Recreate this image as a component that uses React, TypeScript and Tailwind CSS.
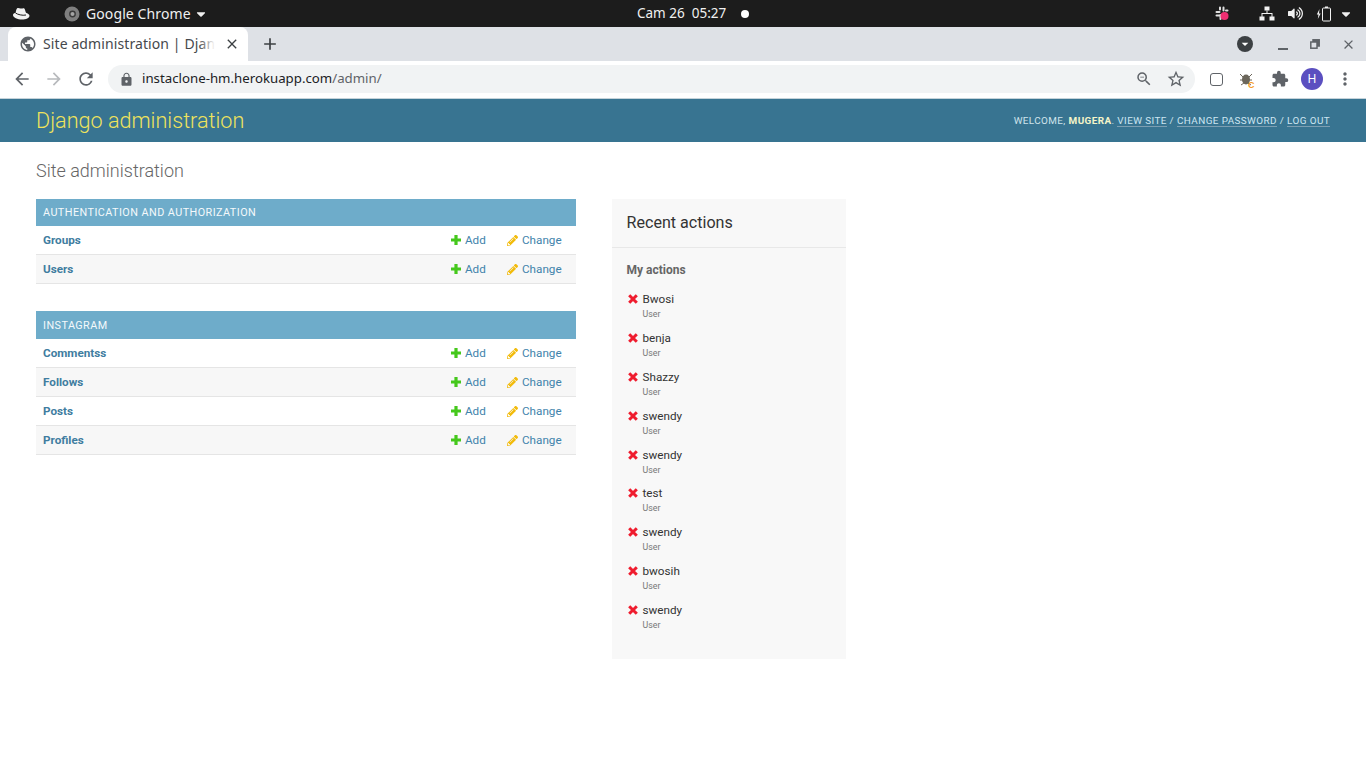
import { FaPencilAlt, FaCaretDown, FaVolumeUp } from "react-icons/fa";
import {
  MdArrowBack,
  MdArrowForward,
  MdRefresh,
  MdLock,
  MdExtension,
  MdMoreVert,
  MdPublic,
  MdClose,
  MdAdd,
  MdZoomOut,
  MdStarBorder,
  MdArrowDropDown,
} from "react-icons/md";

const authRows = ["Groups", "Users"];
const appRows = ["Commentss", "Follows", "Posts", "Profiles"];
const actions = ["Bwosi", "benja", "Shazzy", "swendy", "swendy", "test", "swendy", "bwosih", "swendy"];

function TopBar() {
  return (
    <div className="h-[27px] bg-[#1c1c1c] flex items-center relative text-[#f0f0f0] font-['Noto_Sans',sans-serif] text-[14px]">
      <svg className="ml-[12px] w-[19px] h-[14px]" viewBox="0 0 19 14">
        <path d="M5 1.500c1-.8 2-.2 3.500 0 1.500.2 3-.9 3.800 0 .7.9 1.200 3 1.700 4.200 1.500.6 3.500 1.500 3.500 3 0 2.300-3.500 3.800-7.500 3.800C5.500 12.500 1 10.500 1 8c0-1.500 1.500-2 2.500-2 .5-1.500.7-3.700 1.500-4.500z" fill="#f2f2f2" />
        <path d="M3.500 6c2 1.500 7 2.800 10.500 2" stroke="#1c1c1c" strokeWidth="1" fill="none" />
      </svg>
      <svg className="ml-[33px] w-[16px] h-[16px]" viewBox="0 0 16 16">
        <circle cx="8" cy="8" r="7.500" fill="#7f7f7f" />
        <circle cx="8.500" cy="8" r="3.400" fill="#3a3a3a" />
        <circle cx="8.500" cy="8" r="2" fill="#a5a5a5" />
      </svg>
      <span className="ml-[6px] tracking-[0.1px]">Google Chrome</span>
      <FaCaretDown className="ml-[3px] w-[14px] h-[14px]" />
      <div className="absolute left-[637px] top-0 h-full flex items-center text-[13.500px]">
        <span>Cam 26</span>
        <span className="ml-[7px]">05:27</span>
        <span className="ml-[15px] w-[8px] h-[8px] rounded-full bg-white" />
      </div>
      <div className="ml-auto flex items-center h-full">
        <svg className="w-[14px] h-[15px] mr-[30px]" viewBox="0 0 14 15">
          <g stroke="#e0e0e0" strokeWidth="2" strokeLinecap="round">
            <path d="M1.500 6h3M5 1.500v2M8.500 1.500v3M1.500 9.500h3M5.500 9v4M11 4.500h1.500" />
          </g>
          <circle cx="9.500" cy="10" r="4" fill="#ee2f72" />
        </svg>
        <svg className="w-[16px] h-[15px] mr-[13px]" viewBox="0 0 16 15" fill="#f2f2f2">
          <rect x="5.500" y="0.500" width="5" height="4" />
          <rect x="0.500" y="10.500" width="5" height="4" />
          <rect x="10.500" y="10.500" width="5" height="4" />
          <path d="M7.500 4.500h1V7h5v4h-1V8h-9v3h-1V7h5z" />
        </svg>
        <FaVolumeUp className="w-[15px] h-[15px] mr-[13px]" />
        <svg className="w-[15px] h-[16px] mr-[8px]" viewBox="0 0 15 16">
          <path d="M3.500 3 .8 8.500h1.700L1.800 13l2.900-5.500H3z" fill="#f2f2f2" />
          <rect x="6.500" y="2" width="8" height="13" rx="1" fill="none" stroke="#f2f2f2" />
          <rect x="9" y="0.500" width="3" height="1.500" fill="#f2f2f2" />
        </svg>
        <FaCaretDown className="w-[14px] h-[14px] mr-[13px]" />
      </div>
    </div>
  );
}

function TabStrip() {
  return (
    <div className="h-[34px] bg-[#dee1e6] flex items-end relative font-['Noto_Sans',sans-serif]">
      <div className="ml-[8px] w-[240px] h-[34px] bg-white rounded-t-[8px] flex items-center text-[#45484c] text-[14px]">
        <MdPublic className="ml-[11px] w-[18px] h-[18px] text-[#5f6368] shrink-0" />
        <div className="relative ml-[6px] w-[172px] h-[20px] mt-[-1px]">
          <span className="block whitespace-nowrap leading-[20px] tracking-[0.1px]">Site administration | Djan</span>
          <span className="absolute right-0 top-0 h-full w-[16px] bg-gradient-to-r from-transparent to-white" />
        </div>
        <MdClose className="ml-[9px] w-[16px] h-[16px] text-[#3c4043]" />
      </div>
      <MdAdd className="ml-[12px] mb-[7px] w-[20px] h-[20px] text-[#3c4043]" />
      <div className="ml-auto h-full flex items-center text-[#45484c]">
        <div className="w-[16px] h-[16px] rounded-full bg-[#3c4043] flex items-center justify-center mr-[25px]">
          <MdArrowDropDown className="w-[16px] h-[16px] text-white" />
        </div>
        <span className="w-[10px] h-[2px] bg-[#5f6368] mt-[9px] mr-[22px]" />
        <svg className="w-[10px] h-[10px] mr-[21px]" viewBox="0 0 10 10" fill="none" stroke="#5f6368" strokeWidth="1.500">
          <rect x="3" y="0.800" width="6.200" height="6.200" fill="#5f6368" />
          <rect x="0.800" y="3" width="6.200" height="6.200" fill="#dee1e6" />
        </svg>
        <MdClose className="w-[15px] h-[15px] mr-[10px] text-[#5f6368]" />
      </div>
    </div>
  );
}

function Toolbar() {
  return (
    <div className="h-[38px] bg-white flex items-center font-['Noto_Sans',sans-serif] pb-[1px] border-b border-b-[#c5d3da]">
      <MdArrowBack className="ml-[12px] w-[20px] h-[20px] text-[#5f6368]" />
      <MdArrowForward className="ml-[12px] w-[20px] h-[20px] text-[#b8babd]" />
      <MdRefresh className="ml-[12px] w-[20px] h-[20px] text-[#5f6368]" />
      <div className="ml-[12px] w-[1087px] h-[28px] rounded-full bg-[#f1f3f4] flex items-center">
        <MdLock className="ml-[11px] w-[15px] h-[15px] text-[#5f6368]" />
        <span className="ml-[8px] text-[13.250px] text-[#202124]">
          instaclone-hm.herokuapp.com<span className="text-[#5f6368]">/admin/</span>
        </span>
        <MdZoomOut className="ml-auto w-[18px] h-[18px] text-[#5f6368]" />
        <MdStarBorder className="ml-[13px] mr-[9px] w-[20px] h-[20px] text-[#5f6368]" />
      </div>
      <span className="ml-[15px] w-[13px] h-[13px] rounded-[3px] border-[1.500px] border-[#5f6368]" />
      <svg className="ml-[16px] w-[17px] h-[17px]" viewBox="0 0 17 17">
        <ellipse cx="7" cy="8.500" rx="4" ry="5" fill="#6b665b" />
        <path d="M1 3l3 3M13 3l-3 3M1 9h3M13 9h-3M2 14l3-2M12 14l-3-2" stroke="#6b665b" strokeWidth="1" />
        <text x="9" y="16.500" fontSize="9" fontWeight="700" fill="#f59a23" fontFamily="'Liberation Sans',sans-serif">C</text>
      </svg>
      <MdExtension className="ml-[15px] w-[18px] h-[18px] text-[#5f6368]" />
      <span className="ml-[12px] w-[22px] h-[22px] rounded-full bg-[#5b4fc0] text-white text-[12px] flex items-center justify-center">H</span>
      <MdMoreVert className="ml-[12px] w-[20px] h-[20px] text-[#5f6368]" />
    </div>
  );
}

function ModuleRow({ name, odd }: { name: string; odd: boolean }) {
  return (
    <div className={`h-[29px] flex items-center border-b border-b-[#e5e5e5] pl-[7px] pt-[1px] text-[11.700px] ${odd ? "bg-white" : "bg-[#f7f7f7]"}`}>
      <a className="font-bold text-[#3f7da0] w-[408px]">{name}</a>
      <span className="flex items-center text-[#3f83ab] w-[56px]">
        <svg className="w-[10px] h-[10px] mr-[4px]" viewBox="0 0 10 10" fill="#45c81c">
          <path d="M3.400 0h3.200v3.400H10v3.200H6.600V10H3.400V6.600H0V3.400h3.400z" />
        </svg>
        Add
      </span>
      <span className="flex items-center text-[#3f83ab]">
        <FaPencilAlt className="w-[11px] h-[11px] mr-[4px] text-[#f2bb0b]" />
        Change
      </span>
    </div>
  );
}

function AppModule({ title, rows, className, captionClass }: { title: string; rows: string[]; className?: string; captionClass: string }) {
  return (
    <section className={className}>
      <div className={`${captionClass} bg-[#6eacca] text-[#f4f9fb] text-[10.800px] tracking-[0.45px] pl-[7px] flex items-center`}>{title}</div>
      {rows.map((r, i) => (
        <ModuleRow key={r} name={r} odd={i % 2 === 0} />
      ))}
    </section>
  );
}

function RecentActions() {
  return (
    <aside className="w-[234px] h-[460px] bg-[#f8f8f8] ml-[36px]">
      <h2 className="h-[49px] pl-[14.500px] pt-[14px] text-[16.100px] leading-[20px] text-[#333] border-b border-b-[#e8e8e8]">Recent actions</h2>
      <h3 className="pl-[14.500px] mt-[15px] text-[12px] leading-[14px] font-bold text-[#666]">My actions</h3>
      <ul className="mt-[14px]">
        {actions.map((a, i) => (
          <li key={i} className="h-[38.875px] pl-[15.500px] flex">
            <svg className="w-[10px] h-[10px] mt-[3px] shrink-0" viewBox="0 0 10 10" stroke="#ef1c2e" strokeWidth="3">
              <path d="M1.200 1.200l7.600 7.600M8.800 1.200L1.200 8.800" />
            </svg>
            <div className="ml-[5px]">
              <div className="text-[11.700px] leading-[16px] text-[#333]">{a}</div>
              <div className="text-[8.800px] leading-[12px] mt-[1px] text-[#777]">User</div>
            </div>
          </li>
        ))}
      </ul>
    </aside>
  );
}

export default function App() {
  return (
    <div className="w-[1366px] h-[768px] overflow-hidden bg-white font-['Roboto',sans-serif]">
      <TopBar />
      <TabStrip />
      <Toolbar />
      <header className="h-[43px] bg-[#387491] flex items-center justify-between px-[36px] pt-[1px]">
        <h1 className="text-[21.600px] font-light text-[#efe35c]">Django administration</h1>
        <div className="text-[9.900px] tracking-[0.41px] text-[#d0e4ec] uppercase">
          Welcome, <strong className="text-[#f5f5c8] font-bold">Mugera</strong>.{" "}
          <a className="border-b border-b-[#7d9fb2] text-[#cde6f2]">View site</a> /{" "}
          <a className="border-b border-b-[#7d9fb2] text-[#cde6f2]">Change password</a> /{" "}
          <a className="border-b border-b-[#7d9fb2] text-[#cde6f2]">Log out</a>
        </div>
      </header>
      <main className="px-[36px] pt-[18px]">
        <h1 className="text-[18px] leading-[22px] font-light text-[#666]">Site administration</h1>
        <div className="flex mt-[17px] items-start">
          <div className="w-[540px]">
            <AppModule title="AUTHENTICATION AND AUTHORIZATION" rows={authRows} captionClass="h-[27px] pt-[1px]" />
            <AppModule title="INSTAGRAM" rows={appRows} captionClass="h-[28px] pt-[2px]" className="mt-[27px]" />
          </div>
          <RecentActions />
        </div>
      </main>
    </div>
  );
}
